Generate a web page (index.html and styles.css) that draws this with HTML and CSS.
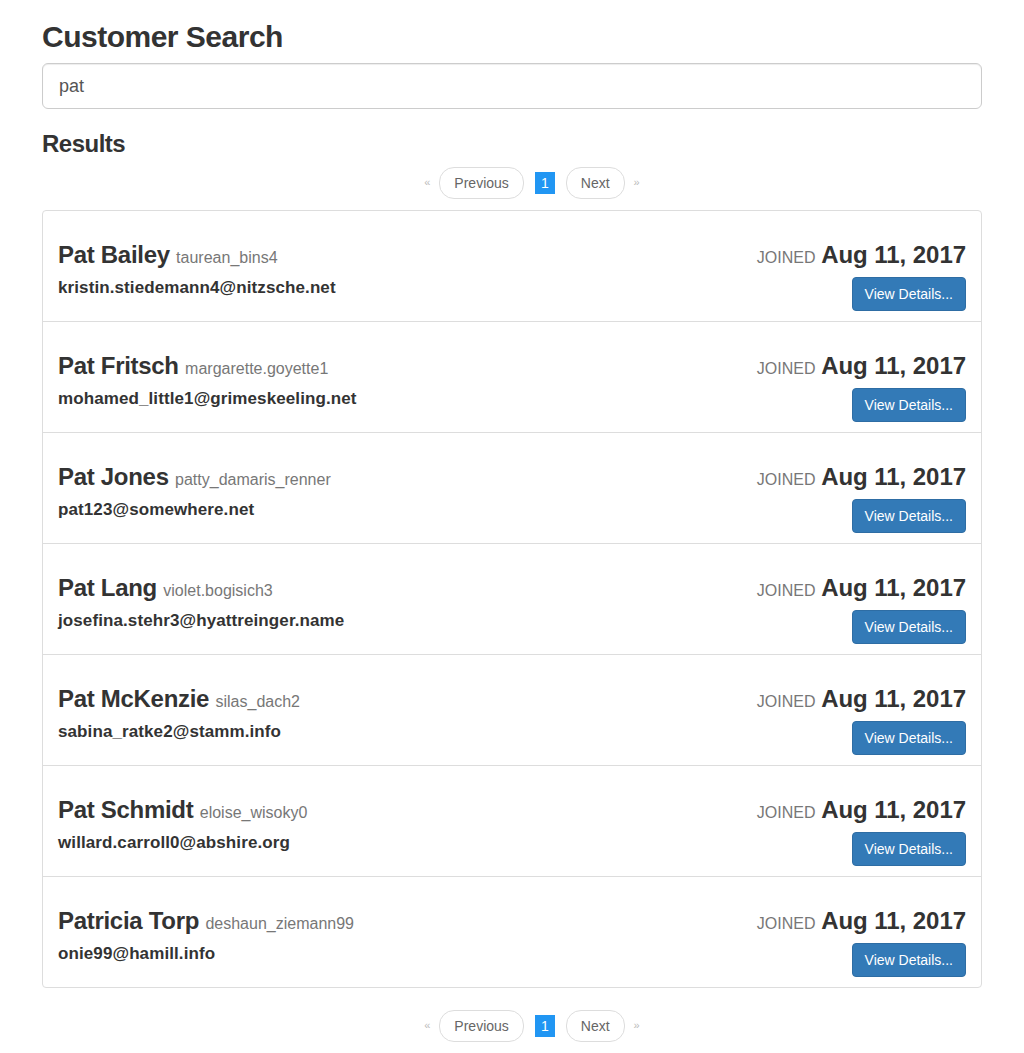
FILE: index.html
```html
<!DOCTYPE html>
<html>
<head>
<meta charset="utf-8">
<title>Customer Search</title>
<link rel="stylesheet" href="styles.css">
</head>
<body>
<div class="container">
  <h1 class="title">Customer Search</h1>
  <input class="search" type="text" value="pat">
  <h3 class="results-title">Results</h3>
  <ul class="pager top">
    <li class="arrow">&laquo;</li>
    <li><span class="pill">Previous</span></li>
    <li><span class="current">1</span></li>
    <li><span class="pill">Next</span></li>
    <li class="arrow">&raquo;</li>
  </ul>
  <ol class="list">
    <li class="item">
      <div class="left">
        <h3 class="name">Pat Bailey <small>taurean_bins4</small></h3>
        <p class="email">kristin.stiedemann4@nitzsche.net</p>
      </div>
      <div class="right">
        <h3 class="joined"><small>JOINED</small> Aug 11, 2017</h3>
        <button class="btn">View Details...</button>
      </div>
    </li>
    <li class="item">
      <div class="left">
        <h3 class="name">Pat Fritsch <small>margarette.goyette1</small></h3>
        <p class="email">mohamed_little1@grimeskeeling.net</p>
      </div>
      <div class="right">
        <h3 class="joined"><small>JOINED</small> Aug 11, 2017</h3>
        <button class="btn">View Details...</button>
      </div>
    </li>
    <li class="item">
      <div class="left">
        <h3 class="name">Pat Jones <small>patty_damaris_renner</small></h3>
        <p class="email">pat123@somewhere.net</p>
      </div>
      <div class="right">
        <h3 class="joined"><small>JOINED</small> Aug 11, 2017</h3>
        <button class="btn">View Details...</button>
      </div>
    </li>
    <li class="item">
      <div class="left">
        <h3 class="name">Pat Lang <small>violet.bogisich3</small></h3>
        <p class="email">josefina.stehr3@hyattreinger.name</p>
      </div>
      <div class="right">
        <h3 class="joined"><small>JOINED</small> Aug 11, 2017</h3>
        <button class="btn">View Details...</button>
      </div>
    </li>
    <li class="item">
      <div class="left">
        <h3 class="name">Pat McKenzie <small>silas_dach2</small></h3>
        <p class="email">sabina_ratke2@stamm.info</p>
      </div>
      <div class="right">
        <h3 class="joined"><small>JOINED</small> Aug 11, 2017</h3>
        <button class="btn">View Details...</button>
      </div>
    </li>
    <li class="item">
      <div class="left">
        <h3 class="name">Pat Schmidt <small>eloise_wisoky0</small></h3>
        <p class="email">willard.carroll0@abshire.org</p>
      </div>
      <div class="right">
        <h3 class="joined"><small>JOINED</small> Aug 11, 2017</h3>
        <button class="btn">View Details...</button>
      </div>
    </li>
    <li class="item">
      <div class="left">
        <h3 class="name">Patricia Torp <small>deshaun_ziemann99</small></h3>
        <p class="email">onie99@hamill.info</p>
      </div>
      <div class="right">
        <h3 class="joined"><small>JOINED</small> Aug 11, 2017</h3>
        <button class="btn">View Details...</button>
      </div>
    </li>
  </ol>
  <ul class="pager bottom">
    <li class="arrow">&laquo;</li>
    <li><span class="pill">Previous</span></li>
    <li><span class="current">1</span></li>
    <li><span class="pill">Next</span></li>
    <li class="arrow">&raquo;</li>
  </ul>
</div>
</body>
</html>
```

FILE: styles.css
```css
* { box-sizing: border-box; }
html, body { margin: 0; padding: 0; background: #fff; }
body {
  font-family: "Liberation Sans", Arial, sans-serif;
  font-size: 14px;
  line-height: 1.428571;
  color: #333;
}
.container {
  width: 970px;
  margin: 0 auto;
  padding: 0 15px;
}
.title {
  margin: 20px 0 10px;
  font-size: 30px;
  line-height: 33px;
  font-weight: bold;
  letter-spacing: -0.5px;
}
.search {
  display: block;
  width: 100%;
  height: 46px;
  padding: 10px 16px;
  font-family: inherit;
  font-size: 18px;
  line-height: 1.33;
  color: #555;
  background: #fff;
  border: 1px solid #ccc;
  border-radius: 6px;
  box-shadow: inset 0 1px 1px rgba(0,0,0,.075);
  outline: none;
}
.results-title {
  margin: 22px 0 10px;
  font-size: 24px;
  line-height: 26px;
  font-weight: bold;
  letter-spacing: -0.5px;
}
.pager {
  list-style: none;
  margin: 0;
  padding: 0 0 0 40px;
  display: flex;
  justify-content: center;
  align-items: center;
  height: 32px;
}
.pager.top { margin-bottom: 11px; }
.pager.bottom { margin-top: 22px; }
.pager li { display: flex; align-items: center; }
.pager .arrow {
  color: #bbb;
  font-size: 11px;
  width: 6px;
  justify-content: center;
}
.pager .arrow:first-child { margin-right: 9px; }
.pager .arrow:last-child { margin-left: 9px; }
.pill {
  display: inline-block;
  padding: 5px 14px;
  font-size: 14px;
  line-height: 20px;
  color: #666;
  background: #fff;
  border: 1px solid #ddd;
  border-radius: 15px;
}
.current {
  display: inline-block;
  width: 20px;
  height: 22px;
  margin: 0 11px;
  line-height: 22px;
  text-align: center;
  color: #fff;
  background: #2196f3;
  font-size: 14px;
}
.list {
  list-style: none;
  margin: 0;
  padding: 0;
  border: 1px solid #ddd;
  border-radius: 4px;
}
.item {
  display: flex;
  justify-content: space-between;
  padding: 11px 15px 10px;
  height: 111px;
  border-top: 1px solid #ddd;
}
.item:first-child { border-top: 0; height: 110px; }
.name, .joined {
  margin: 20px 0 0;
  font-size: 24px;
  line-height: 26px;
  font-weight: bold;
  white-space: nowrap;
}
.name { letter-spacing: -0.3px; }
.joined { letter-spacing: -0.05px; }
.name small, .joined small {
  font-size: 16px;
  font-weight: normal;
  color: #777;
  letter-spacing: 0;
}
.email {
  margin: 5px 0 0;
  font-size: 17px;
  line-height: 24px;
  font-weight: bold;
  letter-spacing: 0.1px;
}
.right {
  display: flex;
  flex-direction: column;
  align-items: flex-end;
}
.btn {
  margin-top: 6px;
  height: 34px;
  padding: 6px 12px;
  font-family: inherit;
  font-size: 14px;
  line-height: 20px;
  color: #fff;
  background: #337ab7;
  border: 1px solid #2e6da4;
  border-radius: 4px;
}
```
